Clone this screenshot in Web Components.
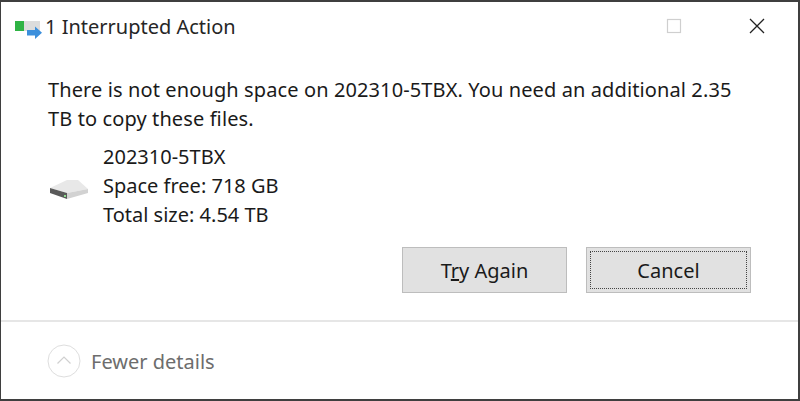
<!DOCTYPE html>
<html>
<head>
<meta charset="utf-8">
<style>
  html, body { margin: 0; padding: 0; background: #fff; }
  body { font-family: "Noto Sans", "Open Sans", sans-serif; }
</style>
</head>
<body>
<copy-dialog>
  <title-bar slot="title">1 Interrupted Action</title-bar>
  <drive-info slot="drive">
    <span>202310-5TBX</span>
    <span>Space free: 718 GB</span>
    <span>Total size: 4.54 TB</span>
  </drive-info>
  <dialog-button slot="buttons"><span>T<u>r</u>y Again</span></dialog-button>
  <dialog-button slot="buttons" focused>Cancel</dialog-button>
  <details-toggle slot="footer">Fewer details</details-toggle>
</copy-dialog>

<script>
class CopyDialog extends HTMLElement {
  constructor() {
    super();
    this.attachShadow({mode: "open"}).innerHTML = `
      <style>
        :host {
          display: flex;
          flex-direction: column;
          box-sizing: border-box;
          width: 800px;
          height: 401px;
          border: 1px solid #3f3f3f;
          border-top-width: 2px;
          border-right-width: 2px;
          border-bottom-width: 2px;
          background: #fff;
          color: #1a1a1a;
          overflow: hidden;
        }
        .msg {
          margin: 0;
          padding: 0 60px 0 47px;
          margin-top: 25px;
          font-size: 20px;
          line-height: 29px;
          letter-spacing: .11px;
        }
        .buttons {
          display: flex;
          justify-content: flex-end;
          gap: 19px;
          padding-right: 47px;
          margin-top: 18px;
        }
        .rule {
          flex: none;
          height: 2px;
          background: #e6e6e6;
          margin-top: 27px;
        }
      </style>
      <slot name="title"></slot>
      <p class="msg">There is not enough space on 202310-5TBX. You need an additional 2.35 TB to copy these files.</p>
      <slot name="drive"></slot>
      <div class="buttons"><slot name="buttons"></slot></div>
      <div class="rule"></div>
      <slot name="footer"></slot>
    `;
  }
}

class TitleBar extends HTMLElement {
  constructor() {
    super();
    this.attachShadow({mode: "open"}).innerHTML = `
      <style>
        :host {
          display: flex;
          flex: none;
          align-items: center;
          height: 48px;
          padding-left: 13px;
          padding-right: 33px;
          font-size: 20px;
        }
        .icon { width: 28px; height: 24px; margin-right: 3px; margin-top: 2px; }
        .text { flex: 1; color: #262626; }
        .ctl { display: block; width: 16px; height: 16px; }
        .max { margin-right: 67px; }
      </style>
      <svg class="icon" viewBox="0 0 28 24">
        <rect x="1" y="6" width="25" height="10" fill="#dcdcdc"/>
        <rect x="1" y="6" width="9" height="10" fill="#2fb344"/>
        <path d="M13 15h8v-3.5l7 6.2-7 6.3v-3.5h-8z" fill="#3b8fdc"/>
      </svg>
      <span class="text"><slot></slot></span>
      <svg class="ctl max" viewBox="0 0 16 16"><rect x="1.5" y="1.5" width="13" height="13" fill="none" stroke="#cfcfcf" stroke-width="1.2"/></svg>
      <svg class="ctl" viewBox="0 0 16 16"><path d="M1 1l14 14M15 1L1 15" fill="none" stroke="#222" stroke-width="1.3"/></svg>
    `;
  }
}

class DriveInfo extends HTMLElement {
  constructor() {
    super();
    this.attachShadow({mode: "open"}).innerHTML = `
      <style>
        :host {
          display: flex;
          align-items: center;
          padding-left: 47px;
          margin-top: 9px;
          font-size: 20px;
          line-height: 29px;
        }
        svg { width: 42px; height: 24px; margin-right: 13px; margin-top: 6px; }
        .lines { display: flex; flex-direction: column; }
        ::slotted(span) { display: block; }
      </style>
      <svg viewBox="0 0 42 24">
        <path d="M2 11L19 3h11l10 9-21 4z" fill="#e8e8e8"/>
        <path d="M2 11l17 5v6L2 16z" fill="#5a5a5a"/>
        <path d="M19 16l21-4v4l-21 6z" fill="#d2d2d2"/>
        <rect x="16" y="18" width="2" height="2" fill="#8fdc8f"/>
      </svg>
      <div class="lines"><slot></slot></div>
    `;
  }
}

class DialogButton extends HTMLElement {
  constructor() {
    super();
    this.attachShadow({mode: "open"}).innerHTML = `
      <style>
        :host {
          display: flex;
          box-sizing: border-box;
          width: 165px;
          height: 46px;
          padding: 3px;
          border: 1px solid #bdbdbd;
          background: #e1e1e1;
          font-size: 20px;
          color: #1a1a1a;
        }
        .in {
          flex: 1;
          display: flex;
          align-items: center;
          justify-content: center;
          border: 1px dotted transparent;
        }
        :host([focused]) .in { border-color: #444; }
      </style>
      <div class="in"><slot></slot></div>
    `;
  }
}

class DetailsToggle extends HTMLElement {
  constructor() {
    super();
    this.attachShadow({mode: "open"}).innerHTML = `
      <style>
        :host {
          display: flex;
          flex: none;
          align-items: center;
          gap: 10px;
          padding-left: 46px;
          height: 78px;
          font-size: 20px;
          color: #6d6d6d;
        }
        svg { width: 34px; height: 34px; }
      </style>
      <svg viewBox="0 0 34 34">
        <circle cx="17" cy="17" r="16" fill="#fff" stroke="#dedede" stroke-width="1"/>
        <path d="M10.5 19.5L17 13l6.5 6.5" fill="none" stroke="#d0d0d0" stroke-width="1.2"/>
      </svg>
      <span><slot></slot></span>
    `;
  }
}

customElements.define("copy-dialog", CopyDialog);
customElements.define("title-bar", TitleBar);
customElements.define("drive-info", DriveInfo);
customElements.define("dialog-button", DialogButton);
customElements.define("details-toggle", DetailsToggle);
</script>
</body>
</html>
